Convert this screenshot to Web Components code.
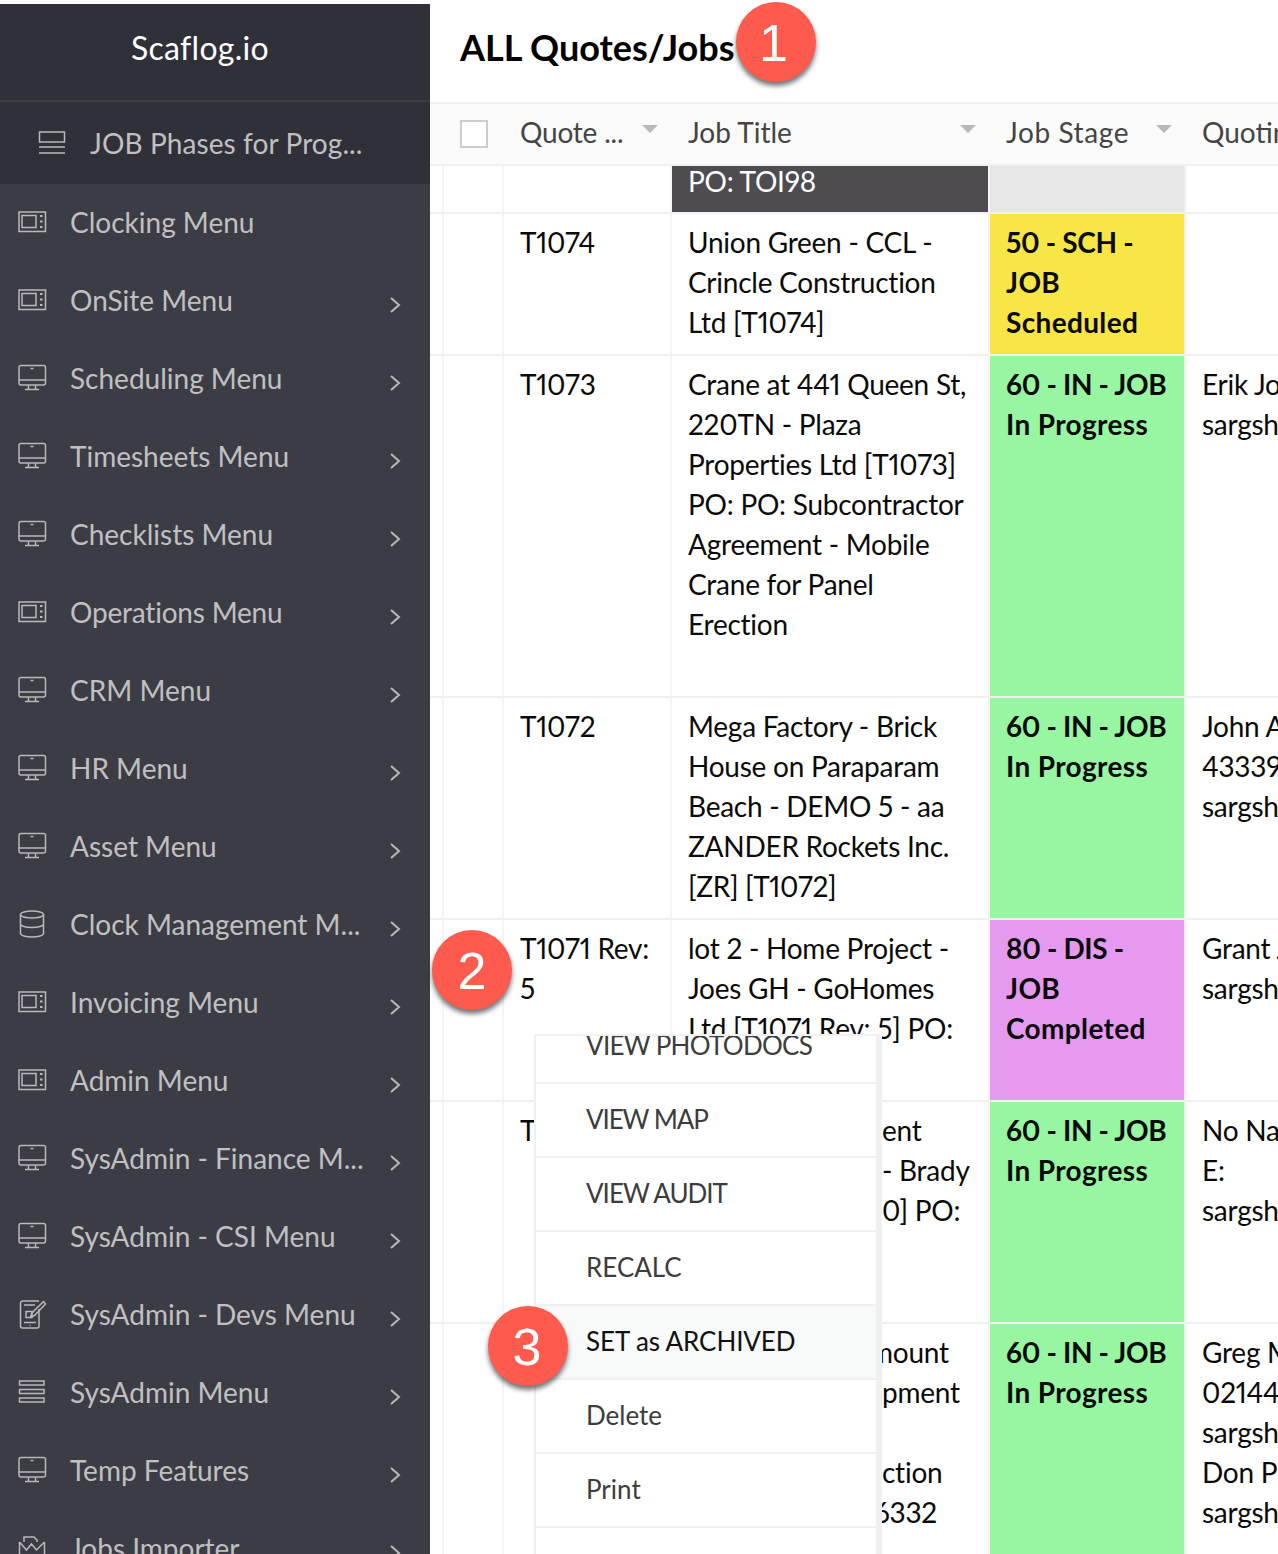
<!DOCTYPE html>
<html lang="en"><head><meta charset="utf-8"><title>ALL Quotes/Jobs</title>
<style>
html,body{margin:0;padding:0;height:1554px;overflow:hidden;background:#fff;font-family:"Lato","Liberation Sans",sans-serif;}
.n{letter-spacing:-.35px}
.m{letter-spacing:-.1px}
</style></head><body>
<app-shell>
<side-bar slot="side">
  <nav-item icon="micro">Clocking Menu</nav-item>
  <nav-item icon="micro" more>OnSite Menu</nav-item>
  <nav-item icon="monitor" more>Scheduling Menu</nav-item>
  <nav-item icon="monitor" more>Timesheets Menu</nav-item>
  <nav-item icon="monitor" more>Checklists Menu</nav-item>
  <nav-item icon="micro" more ls="-.2">Operations Menu</nav-item>
  <nav-item icon="monitor" more>CRM Menu</nav-item>
  <nav-item icon="monitor" more>HR Menu</nav-item>
  <nav-item icon="monitor" more>Asset Menu</nav-item>
  <nav-item icon="db" more>Clock Management M...</nav-item>
  <nav-item icon="micro" more>Invoicing Menu</nav-item>
  <nav-item icon="micro" more>Admin Menu</nav-item>
  <nav-item icon="monitor" more>SysAdmin - Finance M...</nav-item>
  <nav-item icon="monitor" more>SysAdmin - CSI Menu</nav-item>
  <nav-item icon="tablet" more>SysAdmin - Devs Menu</nav-item>
  <nav-item icon="bars" more>SysAdmin Menu</nav-item>
  <nav-item icon="monitor" more>Temp Features</nav-item>
  <nav-item icon="box" more>Jobs Importer</nav-item>
</side-bar>
<job-grid>
  <job-row h="46" tight stage="#e6e6e6" titlebg="#4e4c50"><span slot="title" style="color:#fff">PO: TOI98</span></job-row>
  <job-row h="140" stage="#f7e645">
    <span slot="id">T1074</span>
    <span slot="title">Union Green - CCL -<br>Crincle Construction<br>Ltd [T1074]</span>
    <span slot="st"><span class="n">50 - SCH -</span><br>JOB<br>Scheduled</span>
  </job-row>
  <job-row h="340" stage="#98f5a2">
    <span slot="id">T1073</span>
    <span slot="title">Crane at 441 Queen St,<br>220TN - Plaza<br>Properties Ltd [T1073]<br>PO: PO: Subcontractor<br>Agreement - Mobile<br>Crane for Panel<br>Erection</span>
    <span slot="st"><span class="n">60 - IN - JOB</span><br>In Progress</span>
    <span slot="q">Erik Jones<br>sargsh</span>
  </job-row>
  <job-row h="220" stage="#98f5a2">
    <span slot="id">T1072</span>
    <span slot="title">Mega Factory - Brick<br>House on Paraparam<br>Beach - DEMO 5 - aa<br>ZANDER Rockets Inc.<br><span class="n">[ZR] [T1072]</span></span>
    <span slot="st"><span class="n">60 - IN - JOB</span><br>In Progress</span>
    <span slot="q">John A<br>43339<br>sargsh</span>
  </job-row>
  <job-row h="180" stage="#e59af0">
    <span slot="id">T1071 Rev:<br>5</span>
    <span slot="title">lot 2 - Home Project -<br>Joes GH - GoHomes<br>Ltd [T1071 Rev: 5] PO:</span>
    <span slot="st"><span class="n">80 - DIS -</span><br>JOB<br>Completed</span>
    <span slot="q">Grant J<br>sargsh</span>
  </job-row>
  <job-row h="220" stage="#98f5a2">
    <span slot="id">T</span>
    <span slot="title"><i>ent</i><br><i>- Brady</i><br><i>0] PO:</i></span>
    <span slot="st"><span class="n">60 - IN - JOB</span><br>In Progress</span>
    <span slot="q">No Na<br>E:<br>sargsh</span>
  </job-row>
  <job-row h="240" stage="#98f5a2">
    <span slot="title"><i data-x="182">mount</i><br><i>pment</i><br><br><i>ction</i><br><i data-x="186">6332</i></span>
    <span slot="st"><span class="n">60 - IN - JOB</span><br>In Progress</span>
    <span slot="q">Greg M<br>02144<br>sargsh<br>Don P<br>sargsh</span>
  </job-row>
</job-grid>
<action-menu>
  <menu-row first ls="-.7">VIEW PHOTODOCS</menu-row>
  <menu-row ls="-1.1">VIEW MAP</menu-row>
  <menu-row ls="-1">VIEW AUDIT</menu-row>
  <menu-row>RECALC</menu-row>
  <menu-row active ls="-.1">SET as ARCHIVED</menu-row>
  <menu-row>Delete</menu-row>
  <menu-row>Print</menu-row>
  <menu-row></menu-row>
</action-menu>
<num-badge n="1" style="left:736px;top:2px"></num-badge>
<num-badge n="2" style="left:432px;top:930px"></num-badge>
<num-badge n="3" style="left:488px;top:1306px"></num-badge>
</app-shell>
<script>
const FONT='"Lato","Liberation Sans",sans-serif';
const ICONS={
 micro:'<rect x="1" y="4" width="26.500" height="19.500"/><rect x="4" y="7.500" width="14" height="12"/><path d="M22 8h2.500M22 13.500h2.500M22 19h2.500" stroke-width="2"/>',
 monitor:'<rect x="1" y="1.500" width="26.500" height="19.500" rx="2"/><path d="M1 16h26.500M12.500 4.500h3M10.500 21v4M17.500 21v4M7 25.500h14"/>',
 db:'<ellipse cx="14" cy="4.500" rx="11.500" ry="3.500"/><path d="M2.500 4.500v19c0 2 5.200 3.500 11.500 3.500s11.500-1.500 11.500-3.500v-19M2.500 14c0 2 5.200 3.500 11.500 3.500s11.500-1.500 11.500-3.500"/>',
 tablet:'<path d="M21 1H4.500A2 2 0 0 0 2.500 3v23a2 2 0 0 0 2 2h14.500a2 2 0 0 0 2-2V9"/><path d="M6 5h11M6 22.500h12M11.500 25.500h1" /><path d="M25.500 1.500L14 13l-1.500 4 4-1.500L27.500 4z"/><rect x="8" y="11.500" width="6" height="6"/>',
 bars:'<rect x="1.500" y="3" width="24.500" height="4"/><rect x="1.500" y="11.500" width="24.500" height="4"/><rect x="1.500" y="20" width="24.500" height="4"/>',
 box:'<path d="M1.500 8v22h25V8M1.500 8l7 8 5-6 5 6 8-8M6 8V3h10l3 3v2"/><rect x="13" y="22" width="4" height="4"/><rect x="19" y="22" width="4" height="4"/>'
};
function def(name,html,extra){
  customElements.define(name,class extends HTMLElement{
    constructor(){super();this.attachShadow({mode:'open'});this.shadowRoot.innerHTML=html;}
    connectedCallback(){extra&&extra.call(this,this.shadowRoot);}
  });
}
def('app-shell',`<style>
:host{display:flex;position:relative;width:1278px;height:1554px;overflow:hidden;background:#fff;font-family:${FONT}}
.main{flex:1;min-width:0;display:flex;flex-direction:column;height:1554px;overflow:hidden}
.title{height:102px;box-sizing:border-box;padding:0 0 9px 30px;display:flex;align-items:center;flex:none;font-size:36px;font-weight:700;color:#000;background:#fff;white-space:nowrap}
</style><slot name="side"></slot><div class="main"><div class="title">ALL Quotes/Jobs</div><slot></slot></div>`);

def('side-bar',`<style>
:host{display:block;flex:none;width:430px;height:1550px;margin-top:4px;background:#3c3c46;overflow:hidden}
.brand{height:96px;box-sizing:border-box;display:flex;align-items:center;justify-content:center;padding:0 30px 9px 0;background:#30303a;color:#fff;font-size:32px;letter-spacing:.3px}
.rule{height:2px;background:#3f3f48}
.sub{height:82px;box-sizing:border-box;display:flex;align-items:center;gap:24px;padding-left:38px;background:#30303a;color:#c0c0c0;font-size:28px;white-space:nowrap;letter-spacing:.1px}
svg{flex:none;display:block;fill:none;stroke:#b9b9b9;stroke-width:1.500}
</style><div class="brand">Scaflog.io</div><div class="rule"></div>
<div class="sub"><svg width="28" height="24" viewBox="0 0 28 24"><rect x="1.500" y="1" width="25" height="10"/><path d="M1 16h26M1 22h26"/></svg><span>JOB Phases for Prog...</span></div>
<slot></slot>`);

def('nav-item',`<style>
:host{display:flex;align-items:center;height:78px;box-sizing:border-box;padding-left:18px;color:#c0c0c0;font-size:28px;white-space:nowrap;position:relative}
.ic{width:28px;flex:none;display:flex;margin-right:24px}
svg{display:block;fill:none;stroke:#b9b9b9;stroke-width:1.500;overflow:visible}
.tx{padding-bottom:2px}
.ch{margin-left:auto;margin-right:30px;margin-top:8px;flex:none}
</style><span class="ic"></span><span class="tx"><slot></slot></span>`,function(r){
  if(r.querySelector('.ic svg'))return;
  const l=this.getAttribute('ls');if(l)this.style.letterSpacing=l+'px';
  r.querySelector('.ic').innerHTML=`<svg width="28" height="30" viewBox="0 0 28 30">${ICONS[this.getAttribute('icon')]}</svg>`;
  if(this.hasAttribute('more')){
    const d=document.createElement('span');d.className='ch';
    d.innerHTML='<svg width="10" height="16" viewBox="0 0 10 16"><path d="M1 1l8 7-8 7" stroke-width="2"/></svg>';
    r.appendChild(d);
  }
});

const COLS='14px 60px 168px 318px 196px 1fr';
def('job-grid',`<style>
:host{display:block;flex:1;min-height:0;overflow:hidden;font-size:28px;line-height:40px;color:#0a0a0a;background:#fff}
.head{display:grid;grid-template-columns:${COLS};height:64px;box-sizing:border-box;border-top:2px solid #f0f0f0;border-bottom:2px solid #f0f0f0;background:#fafafa;color:#444;white-space:nowrap;overflow:hidden}
.head>div{display:flex;align-items:center;position:relative;padding:0 0 4px 16px;overflow:hidden;box-sizing:border-box}
.tri{position:absolute;top:21px;width:0;height:0;border:8px solid transparent;border-top:8px solid #b8b8b8;border-bottom:0}
.cb{width:28px;height:28px;box-sizing:border-box;border:2px solid #ccc;background:#fff;position:absolute;left:30px;top:16px;z-index:1}
.h0{padding:0!important;overflow:visible!important}
</style>
<div class="head">
<div class="h0"><span class="cb"></span></div><div style="padding:0"></div>
<div style="letter-spacing:-.2px">Quote ...<span class="tri" style="left:138px"></span></div>
<div>Job Title<span class="tri" style="left:288px"></span></div>
<div style="letter-spacing:.6px">Job Stage<span class="tri" style="left:166px"></span></div>
<div>Quoting</div>
</div><slot></slot>`);

def('job-row',`<style>
:host{display:grid;grid-template-columns:${COLS};box-sizing:border-box;border-bottom:2px solid #f0f0f0;overflow:hidden;white-space:nowrap;font-size:28px;line-height:40px;letter-spacing:-.25px;font-variant-numeric:proportional-nums}
.c{box-sizing:border-box;padding:8px 0 0 16px;overflow:hidden;border-right:2px solid #f5f5f5;min-width:0}
.e{padding:0}
.st{font-weight:700;color:#0a0a0a;border-right-color:#f0f0f0;letter-spacing:.35px}
.q{border-right:0}
:host([tight]) .c{padding-top:0;line-height:30px}
</style>
<div class="c e"></div><div class="c e"></div>
<div class="c"><slot name="id"></slot></div>
<div class="c t"><slot name="title"></slot></div>
<div class="c st"><slot name="st"></slot></div>
<div class="c q"><slot name="q"></slot></div>`,function(r){
  this.style.height=(+this.getAttribute('h')+2)+'px';
  r.querySelector('.st').style.background=this.getAttribute('stage');
  const b=this.getAttribute('titlebg'); if(b)r.querySelector('.t').style.background=b;
  this.querySelectorAll('i').forEach(i=>{i.style.cssText='font-style:normal;display:inline-block;margin-left:'+(i.dataset.x||194)+'px';});
});

def('action-menu',`<style>
:host{position:absolute;left:534px;top:1034px;width:348px;height:530px;box-sizing:border-box;background:#fff;border:solid #f0f0f0;border-width:2px 6px 0 2px;overflow:hidden;font-size:26px;z-index:2;font-family:${FONT}}
</style><slot></slot>`);

def('menu-row',`<style>
:host{display:flex;align-items:center;height:74px;box-sizing:border-box;padding:0 0 2px 50px;border-bottom:2px solid #f0f0f0;color:#3c3c3c;white-space:nowrap;background:#fff}
:host([first]){height:48px;padding-bottom:28px}
:host([active]){background:#f8f9f9;color:#111}
</style><slot></slot>`,function(){const l=this.getAttribute('ls');if(l)this.style.letterSpacing=l+'px';});

def('num-badge',`<style>
:host{position:absolute;width:80px;height:80px;border-radius:50%;background:#ff5a4e;box-shadow:0 4px 5px rgba(0,0,0,.55);color:#fff;font:52px/83px "Liberation Sans",sans-serif;text-align:center;z-index:5}
:host([n="1"]) span{margin-left:-5px}
:host([n="3"]) span{margin-left:-2px}
</style><span></span>`,function(r){r.querySelector('span').textContent=this.getAttribute('n');});
</script>
</body></html>
